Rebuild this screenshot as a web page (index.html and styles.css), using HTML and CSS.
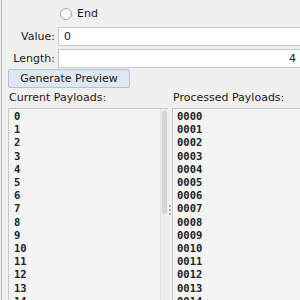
FILE: index.html
```html
<!DOCTYPE html>
<html>
<head>
<meta charset="utf-8">
<link rel="stylesheet" href="styles.css">
</head>
<body>
<div class="panel">
  <div class="radio-row">
    <span class="radio"></span><span class="radio-label">End</span>
  </div>
  <div class="form">
    <label class="lbl">Value:</label>
    <div class="field">0</div>
    <label class="lbl">Length:</label>
    <div class="field right">4</div>
  </div>
  <div class="btn-row"><button class="btn">Generate Preview</button></div>
  <div class="lists">
    <div class="col">
      <div class="col-title">Current Payloads:</div>
      <div class="list left">
        <div class="items">
          <div>0</div><div>1</div><div>2</div><div>3</div><div>4</div><div>5</div><div>6</div><div>7</div><div>8</div><div>9</div><div>10</div><div>11</div><div>12</div><div>13</div><div>14</div>
        </div>
        <div class="scroll"><div class="thumb"></div></div>
      </div>
    </div>
    <div class="divider"><span></span><span></span><span></span></div>
    <div class="col">
      <div class="col-title">Processed Payloads:</div>
      <div class="list right-list">
        <div class="items">
          <div>0000</div><div>0001</div><div>0002</div><div>0003</div><div>0004</div><div>0005</div><div>0006</div><div>0007</div><div>0008</div><div>0009</div><div>0010</div><div>0011</div><div>0012</div><div>0013</div><div>0014</div>
        </div>
      </div>
    </div>
  </div>
</div>
</body>
</html>
```
FILE: styles.css
```css
html, body {
  margin: 0;
  padding: 0;
  width: 300px;
  height: 300px;
  overflow: hidden;
  background: #f0f0f0;
}
.panel {
  margin-left: 1px;
  border-left: 1px solid #b8b8b8;
  height: 300px;
  font-family: "DejaVu Sans", sans-serif;
  font-size: 11px;
  color: #1a1a1a;
  display: flex;
  flex-direction: column;
}
.radio-row {
  display: flex;
  align-items: center;
  height: 27px;
  padding-left: 58px;
}
.radio {
  width: 10px;
  height: 10px;
  border-radius: 50%;
  border: 1px solid #a8a8a8;
  background: #fafafa;
  margin-right: 5px;
}
.form {
  display: grid;
  grid-template-columns: 53px 1fr;
  column-gap: 3px;
  row-gap: 3px;
  align-items: center;
}
.lbl { text-align: right; }
.field {
  height: 17px;
  line-height: 17px;
  background: #fff;
  border: 1px solid #c6c6c6;
  border-right: none;
  padding-left: 5px;
  padding-right: 4px;
}
.field.right { text-align: right; }
.btn-row { padding: 1px 0 0 6px; }
.btn {
  font-family: "DejaVu Sans", sans-serif;
  font-size: 11px;
  color: #1a1a1a;
  height: 19px;
  width: 122px;
  padding: 0;
  background: #dfe8f2;
  border: 1px solid #b3c3d6;
  border-radius: 2px;
}
.lists {
  display: flex;
  flex: 1;
  min-height: 0;
  margin-top: 2px;
}
.col {
  display: flex;
  flex-direction: column;
  min-height: 0;
}
.col:first-child { width: 160px; margin-left: 6px; }
.col:last-child { flex: 1; }
.col-title {
  height: 18px;
  line-height: 16px;
  padding-left: 1px;
}
.list {
  flex: 1;
  border: 1px solid #c8c8c8;
  border-bottom: none;
  border-right: none;
  background: #f4f4f4;
  display: flex;
  overflow: hidden;
  font-family: "DejaVu Sans Mono", monospace;
  font-size: 10.5px;
  font-weight: bold;
  color: #222;
}
.items {
  flex: 1;
  padding: 1px 0 0 5px;
  line-height: 13.2px;
}
.right-list .items { padding-left: 4px; }
.scroll {
  width: 7px;
  background: #ececec;
  border-left: 1px solid #e2e2e2;
  padding: 2px 0;
}
.thumb {
  width: 5px;
  margin-left: 1px;
  height: 103px;
  background: #d4d4d4;
  border-radius: 3px;
}
.divider {
  width: 4px;
  display: flex;
  flex-direction: column;
  align-items: center;
  justify-content: center;
  gap: 2px;
  padding-top: 30px;
}
.divider span {
  width: 2px;
  height: 2px;
  background: #a9a9a9;
}
```
